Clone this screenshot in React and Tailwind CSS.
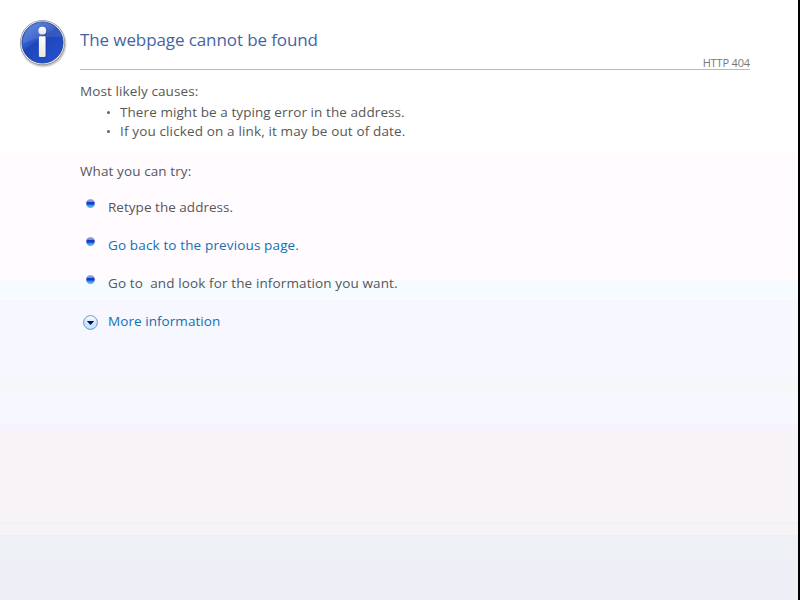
const BANDS = `linear-gradient(to bottom,
  #ffffff 0 153px, #fffbff 153px 197px, #fffdff 197px 200px, #fffbff 200px 280px,
  #f6fbff 280px 298px, #fafbff 298px 300px, #f6f7ff 300px 382px, #f6f7f7 382px 392px,
  #f6f7ff 392px 424px, #f6f3ff 424px 431px, #f7f3f6 431px 522px, #edf3f9 522px 524px,
  #f7f3f6 524px 535px, #edf1f6 535px 563px, #eeeef7 563px 600px)`;

function InfoIcon() {
  return (
    <svg width="50" height="50" viewBox="0 0 50 50" className="block">
      <defs>
        <linearGradient id="ball" x1="0" y1="0" x2="0.7" y2="1">
          <stop offset="0" stopColor="#5d86df" />
          <stop offset="0.45" stopColor="#2c56c6" />
          <stop offset="0.5" stopColor="#1f45b8" />
          <stop offset="1" stopColor="#2450cd" />
        </linearGradient>
        <linearGradient id="letter" x1="0" y1="0" x2="0" y2="1">
          <stop offset="0" stopColor="#ffffff" />
          <stop offset="1" stopColor="#e6e6ea" />
        </linearGradient>
        <radialGradient id="shade">
          <stop offset="0.8" stopColor="#000" stopOpacity="0.5" />
          <stop offset="1" stopColor="#000" stopOpacity="0" />
        </radialGradient>
      </defs>
      <circle cx="25.2" cy="26" r="24" fill="url(#shade)" />
      <circle cx="24.5" cy="24.5" r="22.5" fill="#8d9096" />
      <circle cx="24.5" cy="24.5" r="21.8" fill="#f3f4f6" />
      <circle cx="24.5" cy="24.5" r="20.6" fill="url(#ball)" stroke="#1c3c9c" strokeWidth="0.8" />
      <path d="M4.500 26C5 14 13 5 24.500 4.500C35 4.500 42 11 44 19C29 18 15 20 4.500 26Z" fill="#fff" opacity="0.1" />
      <circle cx="25.200" cy="13.600" r="3.900" fill="#17318b" opacity="0.5" />
      <rect x="21.600" y="19" width="7.100" height="20.800" rx="1.300" fill="#17318b" opacity="0.5" />
      <circle cx="24.300" cy="12.700" r="3.900" fill="url(#letter)" />
      <rect x="20.900" y="18.200" width="6.700" height="20.800" rx="1.300" fill="url(#letter)" />
    </svg>
  );
}

function Bullet() {
  return (
    <svg width="10" height="10" viewBox="0 0 10 10" className="block">
      <defs>
        <linearGradient id="bead" x1="0" y1="0" x2="0" y2="1">
          <stop offset="0" stopColor="#a9b5e8" />
          <stop offset="0.28" stopColor="#6f88e0" />
          <stop offset="0.4" stopColor="#0a2ac6" />
          <stop offset="0.58" stopColor="#1450d8" />
          <stop offset="0.82" stopColor="#35b4f2" />
          <stop offset="1" stopColor="#7aa6b8" />
        </linearGradient>
      </defs>
      <circle cx="4.500" cy="4.500" r="4.200" fill="url(#bead)" stroke="#6d7fb0" strokeOpacity="0.5" strokeWidth="0.700" />
    </svg>
  );
}

function Expand() {
  return (
    <svg width="16" height="16" viewBox="0 0 16 16" className="block">
      <defs>
        <linearGradient id="knob" x1="0" y1="0" x2="0" y2="1">
          <stop offset="0" stopColor="#ffffff" />
          <stop offset="0.45" stopColor="#d5eafa" />
          <stop offset="1" stopColor="#b9e6fb" />
        </linearGradient>
      </defs>
      <circle cx="7.500" cy="7.500" r="6.900" fill="url(#knob)" stroke="#6f93c8" strokeWidth="1" />
      <path d="M3.800 6H11.200L7.500 10Z" fill="#020a6c" />
    </svg>
  );
}

function Row({ icon, children }) {
  return (
    <li className="flex h-[38px]">
      <div className="w-[28px] shrink-0">{icon}</div>
      <div>{children}</div>
    </li>
  );
}

export default function App() {
  return (
    <div
      className="h-[600px] w-[800px] overflow-hidden border-r-2 border-black pt-[18px] font-['Open_Sans','Noto_Sans',sans-serif] text-[13.5px] leading-[19px] text-[#575757]"
      style={{ background: BANDS }}
    >
      <header className="flex h-[52px] pl-[18px]">
        <div className="w-[62px] shrink-0"><InfoIcon /></div>
        <div className="flex w-[670px] justify-between border-b border-[#b6bcc6]">
          <h1 className="whitespace-nowrap pt-[10px] text-[17px] leading-6 tracking-[-0.1px] text-[#4465a2]">
            The webpage cannot be found
          </h1>
          <span className="self-end text-[11px] leading-[13px] tracking-[-0.15px] text-[#787878]">HTTP 404</span>
        </div>
      </header>
      <main className="whitespace-pre pl-20 pt-[12px] tracking-[0.1px]">
        <p>Most likely causes:</p>
        <ul className="pt-[2px]">
          {["There might be a typing error in the address.", "If you clicked on a link, it may be out of date."].map((t, n) => (
            <li key={t} className="flex h-[19px] items-center">
              <i className="ml-[27px] mr-[10px] block size-[3px] rounded-full bg-[#656565]" />
              <span className={n ? "tracking-[0.14px]" : "tracking-[0.08px]"}>{t}</span>
            </li>
          ))}
        </ul>
        <p className="pt-[21px]">What you can try:</p>
        <ul className="pt-[17px]">
          <Row icon={<div className="pl-[6px] pt-px"><Bullet /></div>}><span className="tracking-[0.03px]">Retype the address.</span></Row>
          <Row icon={<div className="pl-[6px] pt-px"><Bullet /></div>}><a className="tracking-[0.14px] text-[#136fb1]">Go back to the previous page.</a></Row>
          <Row icon={<div className="pl-[6px] pt-px"><Bullet /></div>}><span className="tracking-[0.12px]">Go to  and look for the information you want.</span></Row>
          <Row icon={<div className="pl-[3px] pt-[3px]"><Expand /></div>}><a className="tracking-[0.06px] text-[#136fb1]">More information</a></Row>
        </ul>
      </main>
    </div>
  );
}
